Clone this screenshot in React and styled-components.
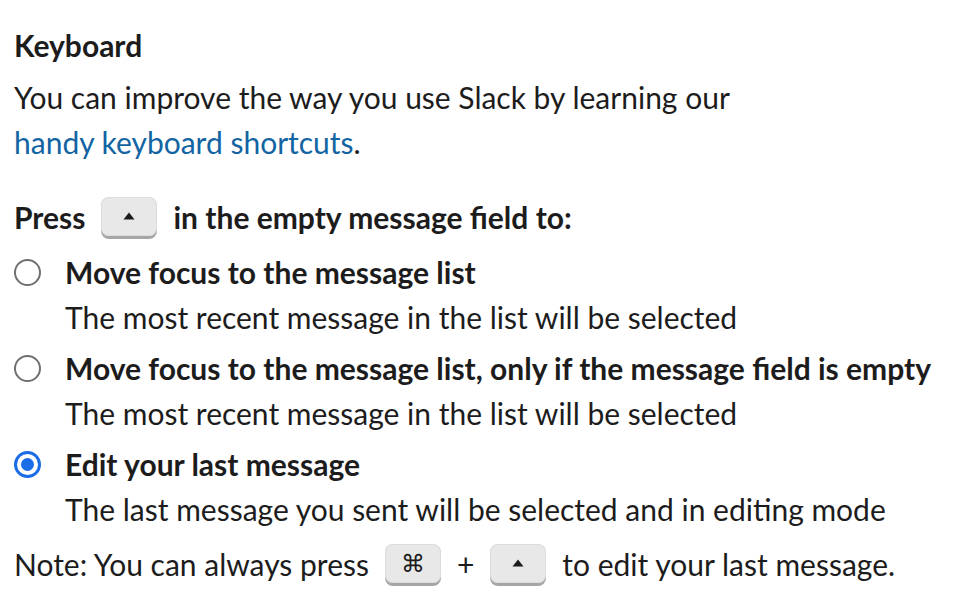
import styled, { createGlobalStyle } from "styled-components";

const Global = createGlobalStyle`
  body {
    margin: 0;
    background: #ffffff;
    font-family: Lato, "Noto Sans", sans-serif;
    color: #1d1c1d;
  }
`;

const Page = styled.div`
  padding: 23px 14px 0 14px;
  font-size: 30px;
  line-height: 45px;
`;

const Heading = styled.h2`
  margin: 0;
  font-size: 30px;
  font-weight: 700;
  line-height: 45px;
`;

const Text = styled.p`
  margin: 7px 0 0 0;
`;

const Link = styled.a`
  color: #1264a3;
  text-decoration: none;
`;

const PressLine = styled.div`
  display: flex;
  align-items: center;
  gap: 16px;
  height: 45px;
  margin-top: 30px;
  font-weight: 700;
`;

const Key = styled.span`
  display: inline-flex;
  align-items: center;
  justify-content: center;
  width: 56px;
  height: 39px;
  border-radius: 8px;
  background: #e8e8e8;
  box-shadow: 0 3px 0 #a6a6a6, inset 0 0 0 1px #dcdcdc;
  font-size: 24px;
  line-height: 1;
  color: #1d1c1d;
  margin-bottom: 3px;
`;

const Options = styled.div`
  display: flex;
  flex-direction: column;
  gap: 6px;
  margin-top: 10px;
`;

const Option = styled.label`
  display: grid;
  grid-template-columns: 51px 1fr;
`;

const Radio = styled.span`
  width: 27px;
  height: 27px;
  box-sizing: border-box;
  border-radius: 50%;
  margin-top: 9px;
  border: ${(p) => (p.checked ? "3px solid #1a6de6" : "2px solid #6f6f6f")};
  display: flex;
  align-items: center;
  justify-content: center;

  &::after {
    content: "";
    width: 13px;
    height: 13px;
    border-radius: 50%;
    background: ${(p) => (p.checked ? "#1a6de6" : "transparent")};
  }
`;

const Label = styled.div`
  font-weight: 700;
`;

const Desc = styled.div`
  font-weight: 400;
`;

const Note = styled.div`
  display: flex;
  align-items: center;
  height: 45px;
  margin-top: 10px;
`;

const Gap = styled.span`
  display: inline-block;
  width: ${(p) => p.w}px;
`;

const UpArrow = () => (
  <svg width="12" height="8" viewBox="0 0 12 8">
    <path d="M6 0.5 L11.5 7.5 L0.5 7.5 Z" fill="#1d1c1d" />
  </svg>
);

const options = [
  {
    label: "Move focus to the message list",
    desc: "The most recent message in the list will be selected",
  },
  {
    label: "Move focus to the message list, only if the message field is empty",
    desc: "The most recent message in the list will be selected",
  },
  {
    label: "Edit your last message",
    desc: "The last message you sent will be selected and in editing mode",
    checked: true,
  },
];

export default function App() {
  return (
    <Page>
      <Global />
      <Heading>Keyboard</Heading>
      <Text>
        You can improve the way you use Slack by learning our
        <br />
        <Link href="#">handy keyboard shortcuts</Link>.
      </Text>
      <PressLine>
        <span>Press</span>
        <Key>
          <UpArrow />
        </Key>
        <span>in the empty message field to:</span>
      </PressLine>
      <Options>
        {options.map((o) => (
          <Option key={o.label}>
            <Radio checked={o.checked} />
            <div>
              <Label>{o.label}</Label>
              <Desc>{o.desc}</Desc>
            </div>
          </Option>
        ))}
      </Options>
      <Note>
        <span>Note: You can always press</span>
        <Gap w={16} />
        <Key>⌘</Key>
        <Gap w={16} />
        <span>+</span>
        <Gap w={16} />
        <Key>
          <UpArrow />
        </Key>
        <Gap w={16} />
        <span>to edit your last message.</span>
      </Note>
    </Page>
  );
}
